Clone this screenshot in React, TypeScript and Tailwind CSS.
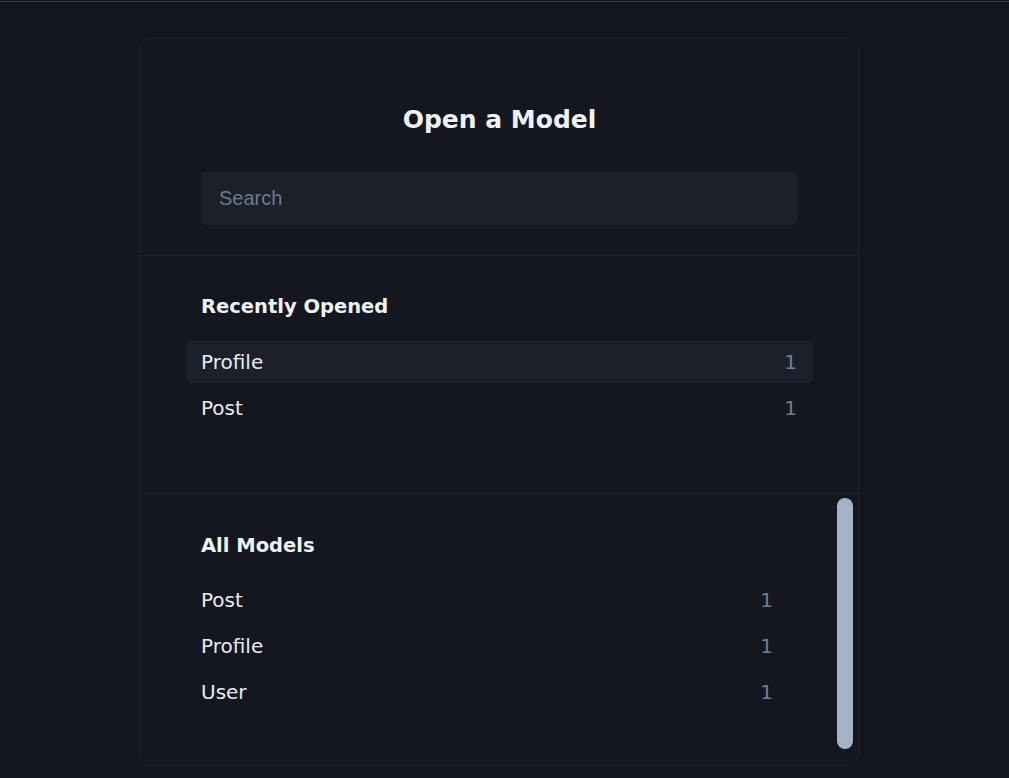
import React from "react";

const recent = [
  { name: "Profile", count: 1, active: true },
  { name: "Post", count: 1, active: false },
];

const all = [
  { name: "Post", count: 1 },
  { name: "Profile", count: 1 },
  { name: "User", count: 1 },
];

function Row({ name, count, active }: { name: string; count: number; active?: boolean }) {
  return (
    <div
      className={`flex items-center justify-between h-[42px] pl-[15px] pr-[16px] rounded-md ${
        active ? "bg-[#1c202b]" : ""
      }`}
    >
      <span className="text-[20px] text-[#e8ecf2]">{name}</span>
      <span className="text-[20px] text-[#6f7d92]">{count}</span>
    </div>
  );
}

export default function App() {
  return (
    <div
      className="min-h-screen bg-[#13161e]"
      style={{ fontFamily: '"DejaVu Sans", Verdana, sans-serif' }}
    >
      <div className="pt-px">
        <div className="h-px bg-[#3a3e47]" />
      </div>

      <div className="ml-[139px] mt-[36px] w-[720px] h-[728px] rounded-xl border border-[#1f232c] bg-[#14171f] flex flex-col overflow-hidden">
        {/* header */}
        <div className="pt-[65px] pb-[30px] pl-[61px] pr-[60px] border-b border-[#1f232c]">
          <h1 className="text-center text-[25px] leading-[32px] font-bold text-[#eef2f7]">
            Open a Model
          </h1>
          <input
            placeholder="Search"
            className="mt-[35px] w-full h-[54px] rounded-md bg-[#1c202b] px-[18px] text-[20px] text-[#e8ecf2] placeholder:text-[#6b7a90] outline-none"
            style={{ fontFamily: '"Liberation Sans", Arial, sans-serif' }}
          />
        </div>

        {/* recently opened */}
        <div className="pt-[37px] pb-[64px] pl-[46px] pr-[45px] border-b border-[#1f232c]">
          <h2 className="pl-[15px] text-[19.5px] leading-[28px] font-bold text-[#eef2f7]">
            Recently Opened
          </h2>
          <div className="mt-[20px] flex flex-col gap-[4px]">
            {recent.map((r) => (
              <Row key={r.name} name={r.name} count={r.count} active={r.active} />
            ))}
          </div>
        </div>

        {/* all models */}
        <div className="flex-1 flex">
          <div className="flex-1 pt-[38px] pl-[46px] pr-[45px]">
            <h2 className="pl-[15px] text-[19.5px] leading-[28px] font-bold text-[#eef2f7]">
              All Models
            </h2>
            <div className="mt-[19px] flex flex-col gap-[4px]">
              {all.map((r) => (
                <Row key={r.name} name={r.name} count={r.count} />
              ))}
            </div>
          </div>
          <div className="w-[24px] pt-[4px]">
            <div className="ml-[3px] w-[16px] h-[251px] rounded-full bg-[#a7b3c5]" />
          </div>
        </div>
      </div>
    </div>
  );
}
